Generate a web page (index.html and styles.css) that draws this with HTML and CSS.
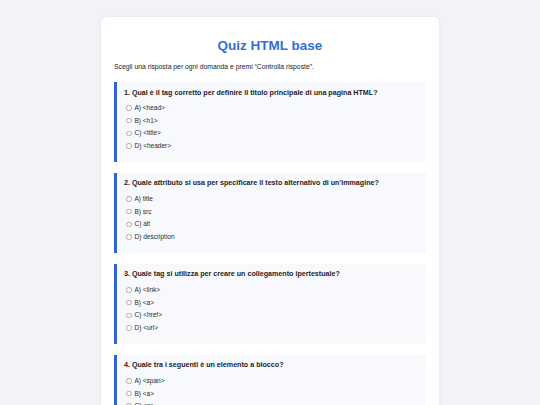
FILE: index.html
```html
<!DOCTYPE html>
<html lang="it">
<head>
<meta charset="utf-8">
<title>Quiz HTML base</title>
<link rel="stylesheet" href="styles.css">
</head>
<body>
<main class="card">
  <h1 class="title">Quiz HTML base</h1>
  <p class="intro">Scegli una risposta per ogni domanda e premi “Controlla risposte”.</p>

  <section class="question">
    <p class="q-text">1. Qual è il tag corretto per definire il titolo principale di una pagina HTML?</p>
    <label class="option"><input type="radio" name="q1"> A) &lt;head&gt;</label>
    <label class="option"><input type="radio" name="q1"> B) &lt;h1&gt;</label>
    <label class="option"><input type="radio" name="q1"> C) &lt;title&gt;</label>
    <label class="option"><input type="radio" name="q1"> D) &lt;header&gt;</label>
  </section>

  <section class="question">
    <p class="q-text">2. Quale attributo si usa per specificare il testo alternativo di un'immagine?</p>
    <label class="option"><input type="radio" name="q2"> A) title</label>
    <label class="option"><input type="radio" name="q2"> B) src</label>
    <label class="option"><input type="radio" name="q2"> C) alt</label>
    <label class="option"><input type="radio" name="q2"> D) description</label>
  </section>

  <section class="question">
    <p class="q-text">3. Quale tag si utilizza per creare un collegamento ipertestuale?</p>
    <label class="option"><input type="radio" name="q3"> A) &lt;link&gt;</label>
    <label class="option"><input type="radio" name="q3"> B) &lt;a&gt;</label>
    <label class="option"><input type="radio" name="q3"> C) &lt;href&gt;</label>
    <label class="option"><input type="radio" name="q3"> D) &lt;url&gt;</label>
  </section>

  <section class="question">
    <p class="q-text">4. Quale tra i seguenti è un elemento a blocco?</p>
    <label class="option"><input type="radio" name="q4"> A) &lt;span&gt;</label>
    <label class="option"><input type="radio" name="q4"> B) &lt;a&gt;</label>
    <label class="option"><input type="radio" name="q4"> C) &lt;p&gt;</label>
    <label class="option"><input type="radio" name="q4"> D) &lt;strong&gt;</label>
  </section>
</main>
</body>
</html>
```

FILE: styles.css
```css
html, body {
  margin: 0;
  padding: 0;
}
body {
  background: #f1f3f7;
  font-family: "Liberation Sans", Arial, sans-serif;
  color: #222;
  padding-top: 17px;
}
.card {
  width: 338px;
  margin: 0 auto;
  box-sizing: border-box;
  background: #ffffff;
  border-radius: 6px;
  box-shadow: 0 1px 4px rgba(30, 40, 60, 0.08);
  padding: 21px 13px 20px;
}
.title {
  margin: 0;
  text-align: center;
  color: #2f6fd6;
  font-size: 13.5px;
  line-height: 16px;
  font-weight: bold;
}
.intro {
  margin: 9px 0 11px;
  font-size: 6.8px;
  line-height: 8px;
  color: #222;
}
.question {
  display: flex;
  flex-direction: column;
  background: #f7f9fc;
  border-left: 3px solid #2f62d6;
  padding: 6.5px 10px 12px 7px;
  margin-bottom: 11px;
}
.q-text {
  margin: 0 0 6.5px;
  font-size: 7.15px;
  line-height: 9px;
  font-weight: bold;
  color: #1f2329;
}
.option {
  display: flex;
  align-items: center;
  height: 8px;
  font-size: 6.5px;
  line-height: 8px;
  color: #2a2a2a;
}
.option + .option {
  margin-top: 4.67px;
}
.option input {
  appearance: none;
  -webkit-appearance: none;
  width: 5.5px;
  height: 5.5px;
  margin: 0 3px 0 2px;
  border: 0.7px solid #a8a8a8;
  border-radius: 50%;
  background: #fff;
  box-sizing: border-box;
}
```
